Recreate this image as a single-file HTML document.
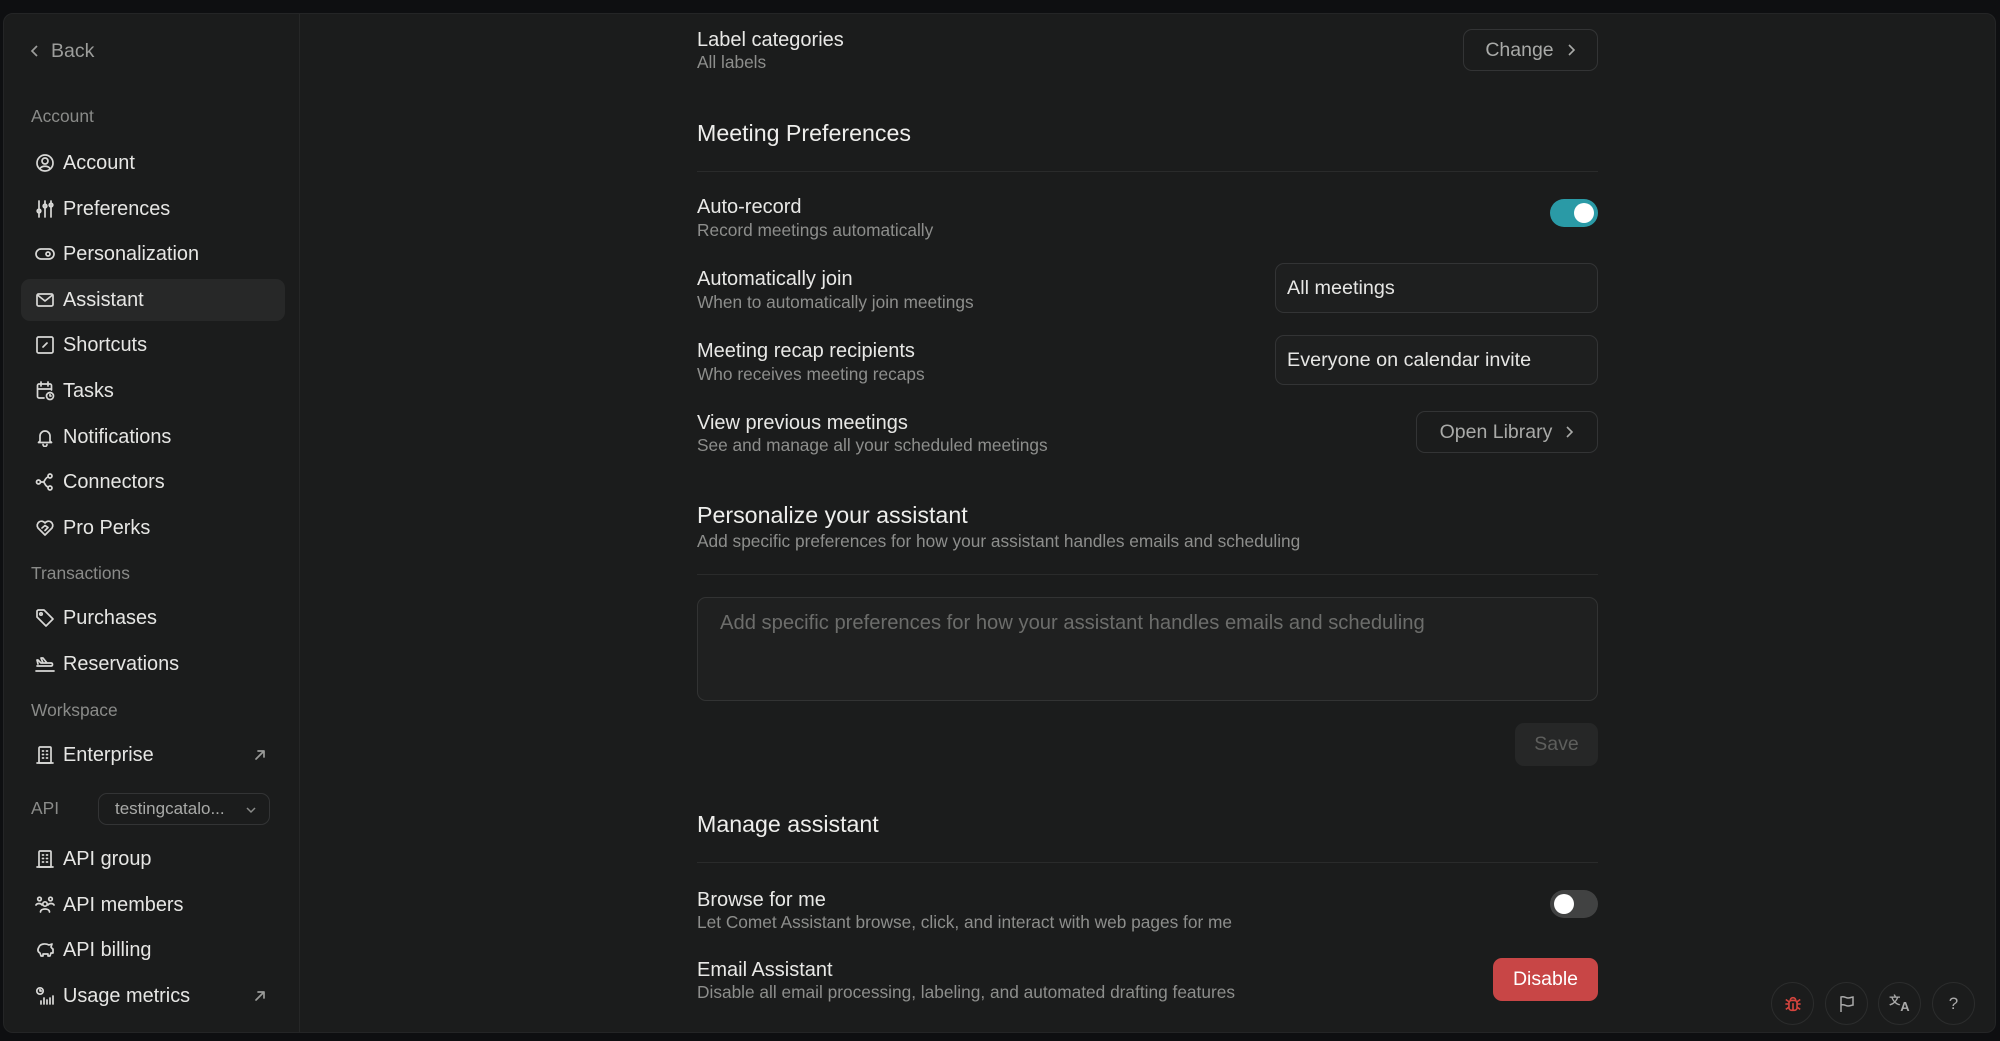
<!DOCTYPE html>
<html><head><meta charset="utf-8"><style>
*{box-sizing:border-box;margin:0;padding:0}
body{width:2000px;height:1041px;background:#0e0f11;font-family:"Liberation Sans",sans-serif;position:relative;overflow:hidden;color:#e6e6e4}
.panel{position:absolute;left:3px;top:13px;width:1993px;height:1020px;background:#1b1c1c;border-radius:10px;border:1px solid #242526;overflow:hidden}
.side{position:absolute;left:0;top:0;width:296px;height:100%;border-right:1px solid #262727}
.a{position:absolute;white-space:nowrap}
.sec{font-size:17.4px;color:#8a8b89;left:27px}
.it{left:17px;width:264px;height:42px;border-radius:9px;font-size:19.9px;color:#e6e6e4;line-height:42px;padding-left:42px}
.it svg{position:absolute;left:14px;top:11px;width:20px;height:20px;fill:none;stroke:#d8d8d6;stroke-width:1.7;stroke-linecap:round;stroke-linejoin:round}
.it .ext{left:auto;right:18px;width:14px;height:14px;top:14px;stroke:#9a9b99}
.t{font-size:20px;color:#e8e8e6}
.s{font-size:17.3px;color:#8d8e8c}
.h{font-size:23.2px;color:#eeeeec}
.line{position:absolute;left:693px;width:901px;height:1px;background:#2a2b2b}
.btn{position:absolute;border:1px solid #333435;border-radius:9px;color:#a9aaa8;font-size:19.5px;display:flex;align-items:center;justify-content:center;gap:12px}
.sel{position:absolute;border:1px solid #333435;border-radius:9px;background:#1e1f1f;color:#e6e6e4;font-size:19.8px;padding-left:11px;display:flex;align-items:center}
.circ{position:absolute;top:968px;width:43px;height:43px;border-radius:50%;border:1.5px solid #2c2d2d;display:flex;align-items:center;justify-content:center;color:#aaa;font-size:17px}
</style></head><body>
<div class="panel">
<div class="side">
 <div class="a" style="left:25px;top:26px;font-size:19.5px;color:#9c9d9b"><svg width="12" height="14" viewBox="0 0 12 14" style="vertical-align:-1px;margin-right:10px"><path d="M8 2 3 7l5 5" fill="none" stroke="#9c9d9b" stroke-width="1.7"/></svg>Back</div>
 <div class="a sec" style="top:92px">Account</div>
 <div class="a it" style="top:128px"><svg viewBox="0 0 20 20"><circle cx="10" cy="10" r="8"/><circle cx="10" cy="8" r="3"/><path d="M5 15.5c2-3 8-3 10 0"/></svg>Account</div>
 <div class="a it" style="top:174px"><svg viewBox="0 0 20 20"><path d="M4 2v16M10 2v16M16 2v16"/><circle cx="4" cy="12" r="1.8"/><circle cx="10" cy="7" r="1.8"/><circle cx="16" cy="6" r="1.8"/></svg>Preferences</div>
 <div class="a it" style="top:219px"><svg viewBox="0 0 20 20"><rect x="1" y="5" width="18" height="10" rx="5"/><circle cx="13" cy="10" r="2"/></svg>Personalization</div>
 <div class="a it" style="top:265px;background:#272828"><svg viewBox="0 0 20 20"><rect x="2" y="4" width="16" height="12" rx="1.5"/><path d="M2.5 5l7.5 6 7.5-6"/></svg>Assistant</div>
 <div class="a it" style="top:310px"><svg viewBox="0 0 20 20"><rect x="2" y="2" width="16" height="16" rx="1.5"/><path d="M8 12l4-4"/></svg>Shortcuts</div>
 <div class="a it" style="top:356px"><svg viewBox="0 0 20 20"><path d="M9 17H4a1.5 1.5 0 0 1-1.5-1.5v-11A1.5 1.5 0 0 1 4 3h11a1.5 1.5 0 0 1 1.5 1.5V9M6 1v4M13 1v4M2.5 8h14"/><circle cx="15" cy="15" r="3.5"/><path d="M15 13.5V15h1"/></svg>Tasks</div>
 <div class="a it" style="top:402px"><svg viewBox="0 0 20 20"><path d="M5 14V9a5 5 0 0 1 10 0v5l1.5 1.5h-13zM8 17.5a2 2 0 0 0 4 0"/></svg>Notifications</div>
 <div class="a it" style="top:447px"><svg viewBox="0 0 20 20"><circle cx="3.5" cy="10" r="2"/><circle cx="15" cy="4" r="2"/><circle cx="15" cy="16" r="2"/><path d="M5.5 10h3M13 5c-3 1-3 4-4.5 5 1.5 1 1.5 4 4.5 5"/></svg>Connectors</div>
 <div class="a it" style="top:493px"><svg viewBox="0 0 20 20"><path d="M10 17 3 10a4 4 0 0 1 7-5 4 4 0 0 1 7 5z"/><path d="M7 10l3-2.5 3 2-3 3"/></svg>Pro Perks</div>
 <div class="a sec" style="top:549px">Transactions</div>
 <div class="a it" style="top:583px"><svg viewBox="0 0 20 20"><path d="M2 3v6l9 9 7-7-9-9H3z"/><circle cx="6" cy="6" r="1.2"/></svg>Purchases</div>
 <div class="a it" style="top:629px"><svg viewBox="0 0 20 20"><path d="M1 17h18M2 12l14 0c2 0 2-3 0-3L6 9 3 6 2 6l1 4M8 9 6 4h2l4 5"/></svg>Reservations</div>
 <div class="a sec" style="top:686px">Workspace</div>
 <div class="a it" style="top:720px"><svg viewBox="0 0 20 20"><rect x="4" y="2" width="12" height="16" rx="1"/><path d="M2 18h16M7.5 6h1M11.5 6h1M7.5 9.5h1M11.5 9.5h1M7.5 13h1M11.5 13h1"/></svg>Enterprise<svg class="ext" viewBox="0 0 14 14"><path d="M3 11 11 3M5 3h6v6"/></svg></div>
 <div class="a sec" style="top:784px">API</div>
 <div class="a" style="left:94px;top:779px;width:172px;height:32px;border:1px solid #333435;border-radius:9px;font-size:17px;color:#a9aaa8;line-height:30px;padding-left:16px">testingcatalo...<svg width="12" height="8" viewBox="0 0 12 8" style="position:absolute;right:12px;top:12px"><path d="M2 2l4 4 4-4" fill="none" stroke="#8a8b89" stroke-width="1.5"/></svg></div>
 <div class="a it" style="top:824px"><svg viewBox="0 0 20 20"><rect x="4" y="2" width="12" height="16" rx="1"/><path d="M2 18h16M7.5 6h1M11.5 6h1M7.5 9.5h1M11.5 9.5h1M7.5 13h1M11.5 13h1"/></svg>API group</div>
 <div class="a it" style="top:870px"><svg viewBox="0 0 20 20"><circle cx="4.5" cy="4" r="1.8"/><circle cx="15.5" cy="4" r="1.8"/><circle cx="10" cy="9" r="2.2"/><path d="M1 10c1-2 5-2 6 0M13 10c1-2 5-2 6 0M5.5 17c0-4 9-4 9 0"/></svg>API members</div>
 <div class="a it" style="top:915px"><svg viewBox="0 0 20 20"><path d="M4 7c1-3 6-4 10-2l3-1-1 3c1 1 1 2 2 2v4h-2l-1 3h-2v-2H8v2H6l-1-3c-2-1-3-3-1-6z"/></svg>API billing</div>
 <div class="a it" style="top:961px"><svg viewBox="0 0 20 20"><circle cx="5" cy="5" r="3.2"/><path d="M5 3.5V5h1.3M9 18v-6M12 18v-4M15 18v-6M18 18V10M6 18v-3"/></svg>Usage metrics<svg class="ext" viewBox="0 0 14 14"><path d="M3 11 11 3M5 3h6v6"/></svg></div>
</div>

<div class="a t" style="left:693px;top:15px">Label categories</div>
<div class="a s" style="left:693px;top:38px">All labels</div>
<div class="btn" style="left:1459px;top:15px;width:135px;height:42px">Change <svg width="10" height="14" viewBox="0 0 10 14"><path d="M3 2l5 5-5 5" fill="none" stroke="#a9aaa8" stroke-width="1.6"/></svg></div>

<div class="a h" style="left:693px;top:106px">Meeting Preferences</div>
<div class="line" style="top:157px"></div>

<div class="a t" style="left:693px;top:182px">Auto-record</div>
<div class="a s" style="left:693px;top:206px">Record meetings automatically</div>
<div class="a" style="left:1546px;top:185px;width:48px;height:28px;border-radius:14px;background:#2a9aa6"><div style="position:absolute;right:4px;top:4px;width:20px;height:20px;border-radius:50%;background:#fff"></div></div>

<div class="a t" style="left:693px;top:254px">Automatically join</div>
<div class="a s" style="left:693px;top:278px">When to automatically join meetings</div>
<div class="sel" style="left:1271px;top:249px;width:323px;height:50px">All meetings</div>

<div class="a t" style="left:693px;top:326px">Meeting recap recipients</div>
<div class="a s" style="left:693px;top:350px">Who receives meeting recaps</div>
<div class="sel" style="left:1271px;top:321px;width:323px;height:50px">Everyone on calendar invite</div>

<div class="a t" style="left:693px;top:398px">View previous meetings</div>
<div class="a s" style="left:693px;top:421px">See and manage all your scheduled meetings</div>
<div class="btn" style="left:1412px;top:397px;width:182px;height:42px">Open Library <svg width="10" height="14" viewBox="0 0 10 14"><path d="M3 2l5 5-5 5" fill="none" stroke="#a9aaa8" stroke-width="1.6"/></svg></div>

<div class="a h" style="left:693px;top:488px">Personalize your assistant</div>
<div class="a s" style="left:693px;top:517px">Add specific preferences for how your assistant handles emails and scheduling</div>
<div class="line" style="top:560px"></div>
<div class="a" style="left:693px;top:583px;width:901px;height:104px;border:1px solid #323333;border-radius:9px;background:#1f2020;padding:14px 22px;font-size:20.2px;color:#6c6d6b">Add specific preferences for how your assistant handles emails and scheduling</div>
<div class="a" style="left:1511px;top:709px;width:83px;height:43px;border-radius:9px;background:#262727;color:#5e5f5d;font-size:19.5px;text-align:center;line-height:43px">Save</div>

<div class="a h" style="left:693px;top:797px">Manage assistant</div>
<div class="line" style="top:848px"></div>

<div class="a t" style="left:693px;top:875px">Browse for me</div>
<div class="a s" style="left:693px;top:898px">Let Comet Assistant browse, click, and interact with web pages for me</div>
<div class="a" style="left:1546px;top:876px;width:48px;height:28px;border-radius:14px;background:#414242"><div style="position:absolute;left:4px;top:4px;width:20px;height:20px;border-radius:50%;background:#fff"></div></div>

<div class="a t" style="left:693px;top:945px">Email Assistant</div>
<div class="a s" style="left:693px;top:968px">Disable all email processing, labeling, and automated drafting features</div>
<div class="a" style="left:1489px;top:944px;width:105px;height:43px;border-radius:9px;background:#c84646;color:#fff;font-size:19.5px;text-align:center;line-height:43px">Disable</div>

<div class="circ" style="left:1767px"><svg width="18" height="18" viewBox="0 0 20 20" fill="none" stroke="#d6453e" stroke-width="1.8"><rect x="5.5" y="6" width="9" height="11" rx="3"/><path d="M7 6a3 3 0 0 1 6 0M1.5 10h4M14.5 10h4M2 5l3.5 2.5M18 5l-3.5 2.5M2 16l3.5-2.5M18 16l-3.5-2.5M10 9v8"/></svg></div>
<div class="circ" style="left:1821px"><svg width="16" height="18" viewBox="0 0 16 18" fill="none" stroke="#aaa" stroke-width="1.5"><path d="M2 17V2c3-1 5 1 7 1s4-1 5-1v8c-1 0-3 1-5 1s-4-2-7-1"/></svg></div>
<div class="circ" style="left:1874px;font-size:13px;font-weight:bold"><span style="font-size:11px;margin-top:-8px">文</span><span style="margin-top:6px">A</span></div>
<div class="circ" style="left:1928px">?</div>
</div>
</body></html>
